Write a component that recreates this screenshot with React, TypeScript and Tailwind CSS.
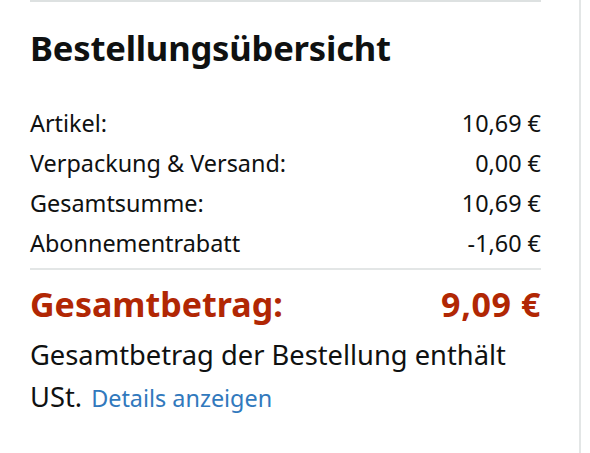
import React from 'react';

const rows = [
  { label: 'Artikel:', value: '10,69 €' },
  { label: 'Verpackung & Versand:', value: '0,00 €' },
  { label: 'Gesamtsumme:', value: '10,69 €' },
  { label: 'Abonnementrabatt', value: '-1,60 €' },
];

export default function App() {
  return (
    <div className="flex h-[453px] w-[590px] bg-white font-['Noto_Sans',sans-serif] text-[#0f1111]">
      <div className="w-[581px] shrink-0 border-r-2 border-[#e3e6e6] pl-[30px] pr-[38px]">
        <div className="border-t-2 border-[#dde1e1] pt-[24px]">
          <h1 className="text-[34.6px] font-bold leading-[44px] tracking-[-0.2px]">Bestellungsübersicht</h1>
          <div className="mt-[34px] flex flex-col">
            {rows.map((row) => (
              <div key={row.label} className="flex h-[40px] items-center justify-between text-[23.4px]">
                <span>{row.label}</span>
                <span>{row.value}</span>
              </div>
            ))}
          </div>
          <div className="mt-[4px] border-t-2 border-[#e3e6e6] pt-[14px]">
            <div className="flex items-center justify-between text-[34px] font-bold leading-[40px] text-[#b12704]">
              <span>Gesamtbetrag:</span>
              <span className="tracking-[0.6px]">9,09 €</span>
            </div>
            <div className="mt-[10px] text-[27.3px] leading-[42px]">
              <p>Gesamtbetrag der Bestellung enthält</p>
              <p className="flex items-baseline gap-[9px]">
                <span>USt.</span>
                <a href="#" className="text-[23.4px] text-[#3179bd]">Details anzeigen</a>
              </p>
            </div>
          </div>
        </div>
      </div>
    </div>
  );
}
